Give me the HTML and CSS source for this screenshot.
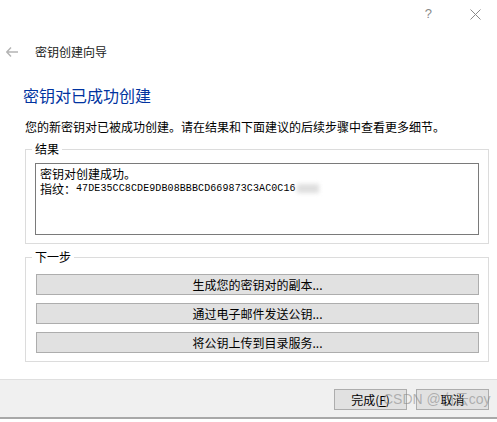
FILE: index.html
```html
<!DOCTYPE html>
<html lang="zh-CN">
<head>
<meta charset="utf-8">
<title>密钥创建向导</title>
<link rel="stylesheet" href="styles.css">
</head>
<body>
<div class="window">
  <div class="titlebar">
    <span class="help">?</span>
    <svg class="close" width="11" height="11" viewBox="0 0 11 11"><path d="M0.5 0.5L10.5 10.5M10.5 0.5L0.5 10.5" stroke="#8a8a8a" stroke-width="1" fill="none"/></svg>
  </div>
  <div class="nav">
    <svg class="back" width="12" height="10" viewBox="0 0 12 10"><path d="M5 0.5L0.8 5L5 9.5M0.8 5H12" stroke="#b4b4b4" stroke-width="1.4" fill="none"/></svg>
    <span class="navtitle">密钥创建向导</span>
  </div>
  <h1 class="heading">密钥对已成功创建</h1>
  <p class="desc">您的新密钥对已被成功创建。请在结果和下面建议的后续步骤中查看更多细节。</p>
  <div class="group result">
    <span class="legend">结果</span>
    <div class="textbox">
      <div class="line">密钥对创建成功。</div>
      <div class="line">指纹：<span class="mono">47DE35CC8CDE9DB08BBBCD669873C3AC0C16</span><span class="smudge"></span></div>
    </div>
  </div>
  <div class="group next">
    <span class="legend">下一步</span>
    <div class="actions">
      <button class="action">生成您的密钥对的副本...</button>
      <button class="action">通过电子邮件发送公钥...</button>
      <button class="action">将公钥上传到目录服务...</button>
    </div>
  </div>
  <div class="footer">
    <button class="btn">完成(<u>F</u>)</button>
    <button class="btn">取消</button>
    <span class="watermark">CSDN @白云coy</span>
  </div>
</div>
</body>
</html>
```
FILE: styles.css
```css
html, body {
  margin: 0;
  padding: 0;
  background: #ffffff;
}
body {
  font-family: "Noto Sans CJK SC", "Liberation Sans", sans-serif;
  font-size: 12px;
  color: #000;
}
.window {
  width: 497px;
  height: 422px;
  position: relative;
  overflow: hidden;
}
.titlebar {
  height: 40px;
  display: flex;
  justify-content: flex-end;
  align-items: flex-start;
}
.help {
  margin-top: 6px;
  color: #8a8a8a;
  font-family: "Liberation Sans", sans-serif;
  font-size: 13px;
  line-height: 16px;
}
.close {
  margin: 9px 16px 0 38px;
}
.nav {
  height: 24px;
  display: flex;
  align-items: center;
}
.back {
  margin-left: 6px;
}
.navtitle {
  margin-left: 17px;
  font-size: 12px;
  line-height: 16px;
  color: #1a1a1a;
}
.heading {
  margin: 21px 0 0 23px;
  font-size: 16px;
  line-height: 20px;
  font-weight: normal;
  color: #0033a0;
}
.desc {
  margin: 14px 0 0 25px;
  font-size: 12px;
  line-height: 16px;
}
.group {
  margin-left: 25px;
  width: 464px;
  box-sizing: border-box;
  border: 1px solid #dcdcdc;
}
.result {
  margin-top: 14px;
}
.next {
  margin-top: 13px;
}
.legend {
  display: block;
  width: fit-content;
  margin: -8px 0 0 6px;
  padding: 0 3px;
  background: #fff;
  line-height: 14px;
  font-size: 12px;
}
.textbox {
  margin: 7px 0 8px 9px;
  width: 444px;
  height: 72px;
  box-sizing: border-box;
  border: 1px solid #7a7a7a;
  padding: 2px 4px;
}
.line {
  line-height: 15px;
  height: 15px;
  white-space: nowrap;
  display: flex;
  align-items: center;
}
.mono {
  font-family: "Liberation Mono", monospace;
  font-size: 10px;
  letter-spacing: 0.1px;
}
.smudge {
  display: inline-block;
  width: 22px;
  height: 9px;
  margin-left: 1px;
  background: #dedede;
  filter: blur(2px);
}
.actions {
  display: flex;
  flex-direction: column;
  gap: 8px;
  margin: 10px 0 8px 10px;
}
.action {
  width: 443px;
  height: 21px;
  box-sizing: border-box;
  border: 1px solid #adadad;
  background: #e1e1e1;
  font-family: inherit;
  font-size: 12px;
  line-height: 16px;
  padding: 0;
  color: #000;
}
.footer {
  margin-top: 17px;
  border-top: 1px solid #dfdfdf;
  border-bottom: 2px solid #a8a8a8;
  background: #f0f0f0;
  height: 40px;
  box-sizing: border-box;
  display: flex;
  justify-content: flex-end;
  align-items: flex-start;
  gap: 9px;
  padding: 9px 8px 0 0;
  position: relative;
}
.btn {
  width: 73px;
  height: 21px;
  box-sizing: border-box;
  border: 1px solid #adadad;
  background: #e1e1e1;
  font-family: inherit;
  font-size: 12px;
  line-height: 16px;
  padding: 0;
  color: #000;
}
.watermark {
  position: absolute;
  left: 383px;
  top: 11px;
  font-family: "Liberation Sans", "Noto Sans CJK SC", sans-serif;
  font-size: 14px;
  line-height: 16px;
  color: rgba(130, 130, 130, 0.55);
  pointer-events: none;
}
```
